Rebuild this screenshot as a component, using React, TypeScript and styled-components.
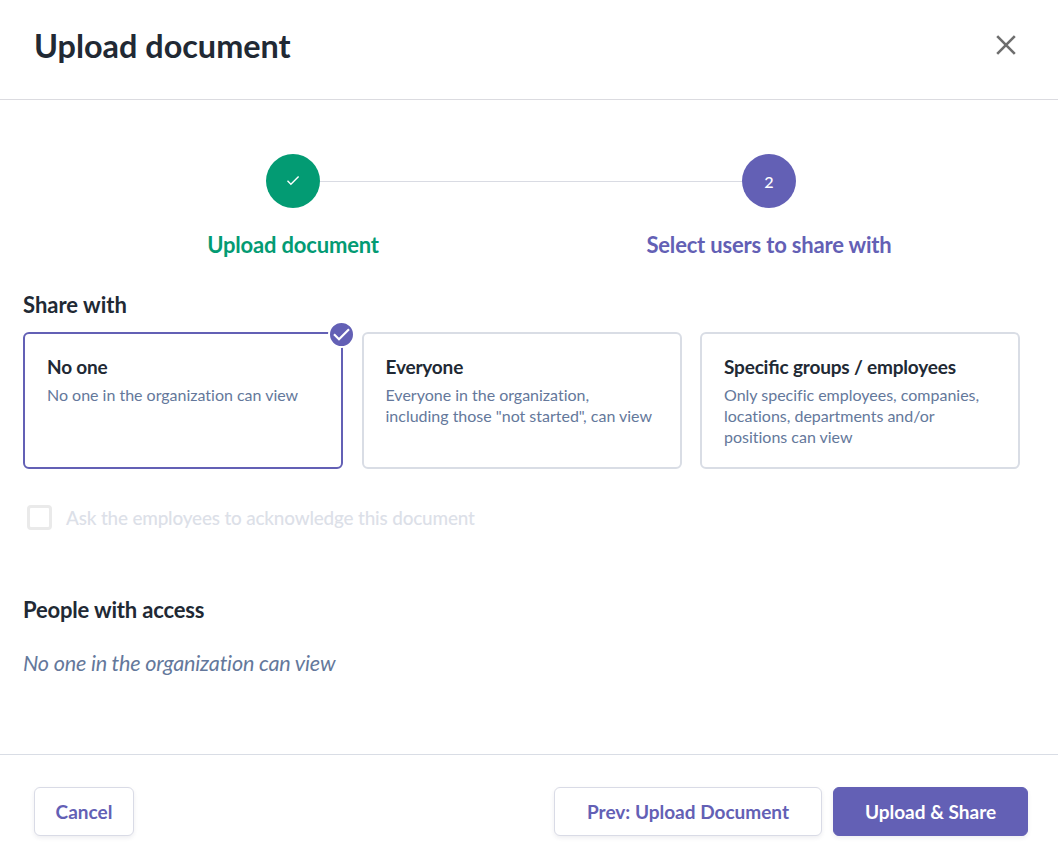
import React from 'react';
import styled, { createGlobalStyle } from 'styled-components';

const GlobalStyle = createGlobalStyle`
  * { box-sizing: border-box; }
  body { margin: 0; background: #fff; font-family: Lato, sans-serif; color: #212934; }
  h1, h2, h3, p { margin: 0; }
`;

const Dialog = styled.div`
  display: flex;
  flex-direction: column;
  height: 852px;
  overflow: hidden;
`;

const Header = styled.header`
  display: flex;
  justify-content: space-between;
  align-items: center;
  height: 100px;
  padding: 0 40px 10px 34px;
  border-bottom: 1px solid #dbdbe0;
`;

const Title = styled.h1`
  padding-top: 2px;
  font-size: 32.4px;
  line-height: 42px;
  font-weight: 700;
`;

const CloseButton = styled.button`
  display: flex;
  padding: 0;
  border: 0;
  background: none;
  cursor: pointer;
`;

const Content = styled.main`
  flex: 1;
  padding: 54px 38px 0 23px;
`;

const Stepper = styled.div`
  display: grid;
  grid-template-columns: 54px 422px 54px;
  align-items: center;
  margin-left: 243px;
`;

const StepCircle = styled.div<{ $color: string }>`
  display: flex;
  align-items: center;
  justify-content: center;
  width: 54px;
  height: 54px;
  border-radius: 50%;
  background: ${(p) => p.$color};
  color: #fff;
  font-size: 16.2px;
  font-weight: 500;
  line-height: 20px;
`;

const StepNumber = styled.span`
  padding-top: 2px;
`;

const StepLine = styled.div`
  height: 1px;
  background: #d9dbe3;
`;

const StepLabels = styled.div`
  display: grid;
  grid-template-columns: 476px 476px;
  margin: 22px 0 0 32px;
  text-align: center;
`;

const StepLabel = styled.div<{ $color: string }>`
  color: ${(p) => p.$color};
  font-size: 22px;
  font-weight: 700;
  line-height: 30px;
  letter-spacing: -0.18px;
`;

const SectionTitle = styled.h2<{ $top: number; $spacing?: number }>`
  margin-top: ${(p) => p.$top}px;
  font-size: 22px;
  font-weight: 700;
  line-height: 30px;
  letter-spacing: ${(p) => p.$spacing ?? 0}px;
`;

const Cards = styled.div`
  display: grid;
  grid-template-columns: repeat(3, 320px);
  justify-content: space-between;
  margin-top: 12px;
`;

const Card = styled.section<{ $selected?: boolean }>`
  position: relative;
  height: 137px;
  padding: 20px 24px 20px 22px;
  border: 2px solid ${(p) => (p.$selected ? '#6360b5' : '#d9dde5')};
  border-radius: 6px;
`;

const CardTitle = styled.h3`
  font-size: 19px;
  font-weight: 700;
  line-height: 26px;
  letter-spacing: -0.18px;
  font-feature-settings: 'liga' 1;
`;

const CardText = styled.p`
  margin-top: 4px;
  color: #64789b;
  font-size: 16px;
  line-height: 21px;
  letter-spacing: -0.01px;
`;

const Badge = styled.span`
  position: absolute;
  top: -13px;
  right: -14px;
  display: flex;
  width: 27px;
  height: 27px;
  border: 2px solid #fff;
  border-radius: 50%;
  background: #6360b5;
`;

const CheckRow = styled.label`
  display: flex;
  align-items: center;
  gap: 15px;
  margin: 34px 0 0 4px;
  color: #dce0e8;
  font-size: 18.9px;
  font-weight: 500;
  line-height: 30px;
  letter-spacing: -0.17px;
`;

const CheckBox = styled.span`
  width: 25px;
  height: 25px;
  margin: -2px -1px 0 0;
  border: 3px solid #eaeaea;
  border-radius: 4px;
`;

const AccessText = styled.p`
  margin-top: 23px;
  color: #64789b;
  font-size: 21.6px;
  font-style: italic;
  line-height: 30px;
  letter-spacing: -0.2px;
`;

const Footer = styled.footer`
  display: flex;
  height: 98px;
  padding: 32px 30px 0 34px;
  border-top: 1px solid #d9dde5;
`;

const Button = styled.button<{ $width: number; $primary?: boolean }>`
  width: ${(p) => p.$width}px;
  height: 49px;
  padding: 0;
  border: 1px solid ${(p) => (p.$primary ? '#6360b5' : '#d9dbe6')};
  border-radius: 6px;
  background: ${(p) => (p.$primary ? '#6360b5' : '#fff')};
  color: ${(p) => (p.$primary ? '#fff' : '#6360b5')};
  box-shadow: 0 2px 4px rgba(33, 41, 82, 0.08);
  font: 700 19px/26px Lato, sans-serif;
`;

const Actions = styled.div`
  display: flex;
  gap: 11px;
  margin-left: auto;
`;

const options = [
  { title: 'No one', text: 'No one in the organization can view', selected: true },
  { title: 'Everyone', text: 'Everyone in the organization, including those "not started", can view' },
  {
    title: 'Specific groups / employees',
    text: 'Only specific employees, companies, locations, departments and/or positions can view',
  },
];

export default function App() {
  return (
    <>
      <GlobalStyle />
      <Dialog>
        <Header>
          <Title>Upload document</Title>
          <CloseButton aria-label="Close">
            <svg width="24" height="24" viewBox="0 0 24 24" fill="none" stroke="#6e6e6e" strokeWidth="2.6">
              <path d="M3.2 3.2 20.8 20.8M20.8 3.2 3.2 20.8" />
            </svg>
          </CloseButton>
        </Header>
        <Content>
          <Stepper>
            <StepCircle $color="#039b73">
              <svg width="14" height="12" viewBox="0 0 14 12" fill="none" stroke="#fff" strokeWidth="1.4">
                <path d="M1.5 5.8 4.9 9.2 12.6 1.5" />
              </svg>
            </StepCircle>
            <StepLine />
            <StepCircle $color="#6360b5">
              <StepNumber>2</StepNumber>
            </StepCircle>
          </Stepper>
          <StepLabels>
            <StepLabel $color="#039b73">Upload document</StepLabel>
            <StepLabel $color="#6360b5">Select users to share with</StepLabel>
          </StepLabels>
          <SectionTitle $top={30}>Share with</SectionTitle>
          <Cards>
            {options.map((o) => (
              <Card key={o.title} $selected={o.selected}>
                <CardTitle>{o.title}</CardTitle>
                <CardText>{o.text}</CardText>
                {o.selected && (
                  <Badge>
                    <svg width="23" height="23" viewBox="0 0 23 23" fill="none" stroke="#fff" strokeWidth="2.2">
                      <path d="M4 11.2 9 16.2 19 6.2" />
                    </svg>
                  </Badge>
                )}
              </Card>
            ))}
          </Cards>
          <CheckRow>
            <CheckBox />
            Ask the employees to acknowledge this document
          </CheckRow>
          <SectionTitle $top={62} $spacing={-0.17}>People with access</SectionTitle>
          <AccessText>No one in the organization can view</AccessText>
        </Content>
        <Footer>
          <Button $width={100}>Cancel</Button>
          <Actions>
            <Button $width={268}>Prev: Upload Document</Button>
            <Button $width={195} $primary>Upload &amp; Share</Button>
          </Actions>
        </Footer>
      </Dialog>
    </>
  );
}
